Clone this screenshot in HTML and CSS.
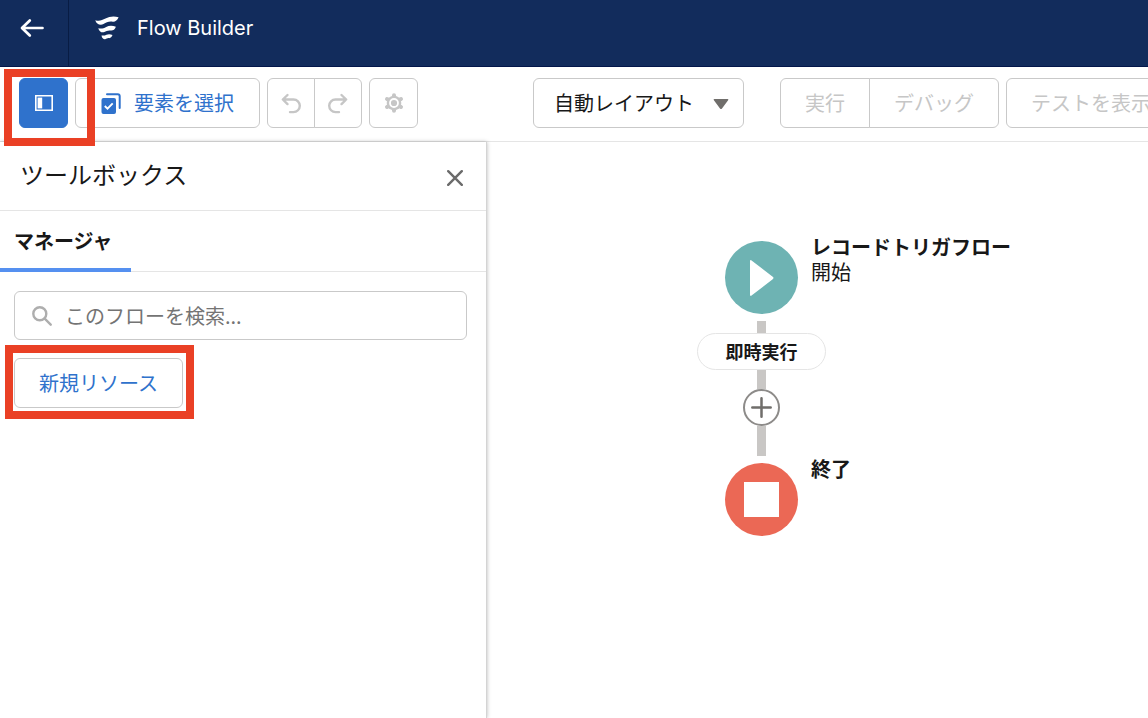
FILE: index.html
```html
<!DOCTYPE html>
<html lang="ja">
<head>
<meta charset="utf-8">
<title>Flow Builder</title>
<link rel="stylesheet" href="styles.css">
</head>
<body>
<header class="header">
  <a class="back" href="#" aria-label="戻る">
    <svg width="24" height="20" viewBox="0 0 24 20" fill="none" stroke="#fff" stroke-width="2.700" stroke-linecap="round" stroke-linejoin="round"><path d="M9.800 2.500 2 10l7.800 7.500M2.500 10H22.500"/></svg>
  </a>
  <div class="brand">
    <svg width="24" height="24" viewBox="0 0 24 24" fill="#fff"><path d="M.3 4.200C4 5.400 7 4.400 10.500 2.600 14.500.4 19 0 23.600 1.300 22.300 4.400 20.300 6 17.800 5.800 13.800 5 11.500 6.600 8.500 8.100 5 9.500 1.300 8.100.3 4.200Z"/><path d="M3.300 12.200C6.500 13 8.600 12.200 11.200 10.900 14.200 9.500 17.500 9.500 20.900 10.800 19.800 13.700 18 14.800 15.800 14.600 13 14.100 11.300 15.200 9.300 16.100 6.700 17 4.100 15.600 3.300 12.200Z"/><path d="M6.500 19.400C8.600 19.900 9.900 19.500 11.500 18.700 13.400 17.900 15.500 18 17.500 19.100 16.700 21.400 15.400 22.300 13.900 22.100 12.500 21.900 11.500 22.900 10.200 23.200 8.500 23.500 7 22.200 6.500 19.400Z"/></svg>
    <h1 class="brand-name">Flow Builder</h1>
  </div>
</header>

<div class="toolbar">
  <div class="toggle-wrap">
    <button class="btn btn-square btn-active" type="button" aria-label="ツールボックスを切り替え">
      <svg width="18" height="16" viewBox="0 0 18 16"><path fill="none" stroke="#fff" stroke-width="1.600" d="M.8.8h16.400v14.400H.8z"/><path fill="#fff" d="M2.600 2.600h4.600v10.800H2.600z"/></svg>
    </button>
    <span class="highlight highlight-toggle"></span>
  </div>
  <button class="btn btn-link" type="button">
    <svg width="20" height="22" viewBox="0 0 20 22"><path d="M6 2.300h10.700a2 2 0 0 1 2 2V16" fill="none" stroke="#2f72cc" stroke-width="2" stroke-linecap="round"/><rect x="0.500" y="6" width="14.500" height="16" rx="2" fill="#2f72cc"/><path d="m3.800 14 2.700 2.700 5.200-5.400" fill="none" stroke="#fff" stroke-width="1.900"/></svg>
    要素を選択
  </button>
  <div class="group">
    <button class="btn btn-icon" type="button" aria-label="元に戻す" disabled>
      <svg width="20" height="21" viewBox="0 0 20 21" fill="none" stroke="#c6c6c6" stroke-width="2.400" stroke-linecap="round" stroke-linejoin="round"><path d="M6.500 2 1.800 6.500l4.700 4.600M2 6.500h10.500a6.300 6.300 0 0 1 0 12.600H9"/></svg>
    </button>
    <button class="btn btn-icon" type="button" aria-label="やり直す" disabled>
      <svg width="20" height="21" viewBox="0 0 20 21" fill="none" stroke="#c6c6c6" stroke-width="2.400" stroke-linecap="round" stroke-linejoin="round"><path d="m13.500 2 4.700 4.500-4.700 4.600M18 6.500H7.500a6.300 6.300 0 0 0 0 12.600H11"/></svg>
    </button>
  </div>
  <button class="btn btn-square" type="button" aria-label="設定" disabled>
    <svg width="20" height="20" viewBox="0 0 20 20"><circle cx="10" cy="10" r="7.300" fill="#c6c6c6"/><path fill="none" stroke="#c6c6c6" stroke-width="4" stroke-linecap="round" d="M10 2.200v15.600M3 6l14 8M3 14l14-8"/><circle cx="10" cy="10" r="4" fill="#c6c6c6" stroke="#fff" stroke-width="1.800"/></svg>
  </button>
  <div class="select-wrap">
    <select class="select" aria-label="レイアウト"><option>自動レイアウト</option></select>
    <svg class="select-arrow" width="16" height="11" viewBox="0 0 16 11"><path fill="#706e6b" d="M1.500 0h13q1.500 0 .6 1.200L9 9.400q-1 1.200-2 0L.9 1.200Q0 0 1.500 0Z"/></svg>
  </div>
  <div class="group">
    <button class="btn btn-text" type="button" disabled>実行</button>
    <button class="btn btn-text" type="button" disabled>デバッグ</button>
  </div>
  <button class="btn btn-text" type="button" disabled>テストを表示</button>
</div>

<div class="workspace">
  <aside class="panel">
    <div class="panel-head">
      <h2 class="panel-title">ツールボックス</h2>
      <button class="close" type="button" aria-label="閉じる">
        <svg width="16" height="16" viewBox="0 0 16 16" stroke="#6b6b6b" stroke-width="2.400" stroke-linecap="round"><path d="m1.200 1.200 13.600 13.600m0-13.600L1.200 14.800"/></svg>
      </button>
    </div>
    <nav class="tabs"><a class="tab" href="#">マネージャ</a></nav>
    <div class="panel-body">
      <label class="search">
        <svg width="20" height="20" viewBox="0 0 20 20" fill="none" stroke="#aeaeae" stroke-width="2.400" stroke-linecap="round"><circle cx="7.800" cy="7.800" r="6.500"/><path d="m12.700 12.700 6 6"/></svg>
        <input class="search-input" type="text" aria-label="フローを検索" placeholder="このフローを検索...">
      </label>
      <div class="resource">
        <button class="btn btn-link btn-text" type="button">新規リソース</button>
        <span class="highlight highlight-resource"></span>
      </div>
    </div>
  </aside>

  <main class="canvas">
    <div class="flow">
      <div class="node node-start">
        <svg width="24" height="36" viewBox="0 0 24 36"><path fill="#fff" d="M0 1.500Q0-.8 1.900.7L22.700 16.800q1.600 1.200 0 2.400L1.900 35.300Q0 36.800 0 34.500Z"/></svg>
        <div class="node-label"><strong>レコードトリガフロー</strong><span>開始</span></div>
      </div>
      <div class="line line-first"></div>
      <div class="pill">即時実行</div>
      <div class="line line-mid"></div>
      <button class="add" type="button" aria-label="要素を追加">
        <svg width="21" height="21" viewBox="0 0 21 21" stroke="#706e6b" stroke-width="2.500" stroke-linecap="round"><path d="M10.500 1.300v18.400M1.300 10.500h18.400"/></svg>
      </button>
      <div class="line line-last"></div>
      <div class="node node-end">
        <span class="stop"></span>
        <div class="node-label"><strong>終了</strong></div>
      </div>
    </div>
  </main>
</div>
</body>
</html>
```

FILE: styles.css
```css
* {
  box-sizing: border-box;
}

body {
  margin: 0;
  min-height: 100vh;
  display: flex;
  flex-direction: column;
  overflow: hidden;
  background: #fff;
  color: #181818;
  font: 20px/26px "Noto Sans CJK JP", sans-serif;
}

button,
select,
input {
  font: inherit;
  color: inherit;
}

svg {
  display: block;
  flex: none;
}

h1,
h2 {
  margin: 0;
  font-weight: 400;
}

.header {
  display: flex;
  height: 67px;
  background: #122c5c;
  border-bottom: 1px solid #03164a;
}

.back {
  display: flex;
  justify-content: center;
  width: 69px;
  padding: 18px 4px 0 0;
  border-right: 1px solid #081c44;
}

.brand {
  display: flex;
  align-items: center;
  gap: 18px;
  height: 56px;
  padding-left: 26px;
}

.brand-name {
  color: #fff;
  font: 20px/26px Inter, sans-serif;
}

.toolbar {
  display: flex;
  gap: 7px;
  padding: 11px 0 13px 19px;
  border-bottom: 1px solid #e5e5e5;
  white-space: nowrap;
}

.toggle-wrap,
.resource {
  position: relative;
}

.btn {
  display: flex;
  flex: none;
  align-items: center;
  justify-content: center;
  gap: 13px;
  height: 50px;
  padding: 0 25px;
  border: 1px solid #c9c9c9;
  border-radius: 6px;
  background: #fff;
}

.btn:disabled {
  color: #c6c6c6;
}

.btn-link {
  color: #2f72cc;
}

.btn-text {
  padding: 0 24px;
}

.btn-square {
  width: 49px;
  padding: 0;
}

.btn-active {
  border-color: #2f72cc;
  background: #2f72cc;
}

.btn-icon {
  width: 48px;
  padding: 0;
}

.group {
  display: flex;
}

.group .btn:first-child {
  border-radius: 6px 0 0 6px;
}

.group .btn:last-child {
  margin-left: -1px;
  border-radius: 0 6px 6px 0;
}

.highlight {
  position: absolute;
  z-index: 2;
  border: 8px solid #ea4025;
  pointer-events: none;
}

.highlight-toggle {
  inset: -9px -27px -18px -15px;
}

.highlight-resource {
  inset: -13px -11px -11px -9px;
}

.select-wrap {
  position: relative;
  flex: none;
  margin: 0 29px 0 108px;
}

.select {
  appearance: none;
  width: 211px;
  height: 50px;
  padding: 0 20px;
  border: 1px solid #c9c9c9;
  border-radius: 6px;
  background: #fff;
}

.select-arrow {
  position: absolute;
  top: 21px;
  right: 15px;
  pointer-events: none;
}

.workspace {
  display: flex;
  flex: 1;
}

.panel {
  flex: none;
  width: 487px;
  border-right: 1px solid #d4d4d4;
  box-shadow: 0 0 4px rgba(0, 0, 0, 0.28);
}

.panel-head {
  display: flex;
  align-items: center;
  justify-content: space-between;
  height: 69px;
  padding: 0 15px 0 20px;
  border-bottom: 1px solid #e5e5e5;
}

.panel-title {
  padding-bottom: 4px;
  font-size: 24px;
  line-height: 32px;
}

.close {
  padding: 12px 8px 8px;
  border: 0;
  background: none;
}

.tabs {
  display: flex;
  border-bottom: 1px solid #e5e5e5;
}

.tab {
  margin-bottom: -1px;
  padding: 17px 18px 14px 14px;
  border-bottom: 4px solid #5590f0;
  color: inherit;
  font-weight: 700;
  text-decoration: none;
}

.panel-body {
  display: grid;
  justify-items: start;
  gap: 18px;
  padding: 19px 19px 0 14px;
}

.search {
  display: flex;
  align-items: center;
  gap: 13px;
  width: 100%;
  height: 49px;
  padding: 0 17px;
  border: 1px solid #c9c9c9;
  border-radius: 6px;
}

.search-input {
  flex: 1;
  min-width: 0;
  padding: 0;
  border: 0;
  outline: 0;
  background: none;
}

.search-input::placeholder {
  color: #747474;
}

.canvas {
  flex: 1;
  padding: 99px 0 0 210px;
}

.flow {
  display: flex;
  flex-direction: column;
  align-items: center;
  width: 129px;
}

.node {
  position: relative;
  display: grid;
  place-items: center;
  width: 73px;
  height: 73px;
  border-radius: 50%;
}

.node-start {
  margin-bottom: 7px;
  background: #6eb3b3;
}

.node-end {
  margin-top: 7px;
  background: #eb6855;
}

.node-label {
  position: absolute;
  top: -7px;
  left: 86px;
  display: grid;
  line-height: 25px;
  white-space: nowrap;
}

.stop {
  width: 35px;
  height: 35px;
  background: #fff;
}

.line {
  width: 9px;
  background: #c9c7c5;
}

.line-first {
  height: 12px;
}

.line-mid {
  height: 19px;
}

.line-last {
  height: 30px;
}

.pill {
  width: 100%;
  border: 1px solid #e5e5e5;
  border-radius: 19px;
  font-size: 18px;
  font-weight: 700;
  line-height: 35px;
  text-align: center;
}

.add {
  display: grid;
  place-items: center;
  width: 37px;
  height: 37px;
  padding: 0;
  border: 2px solid #8d8b89;
  border-radius: 50%;
  background: #fff;
}
```
